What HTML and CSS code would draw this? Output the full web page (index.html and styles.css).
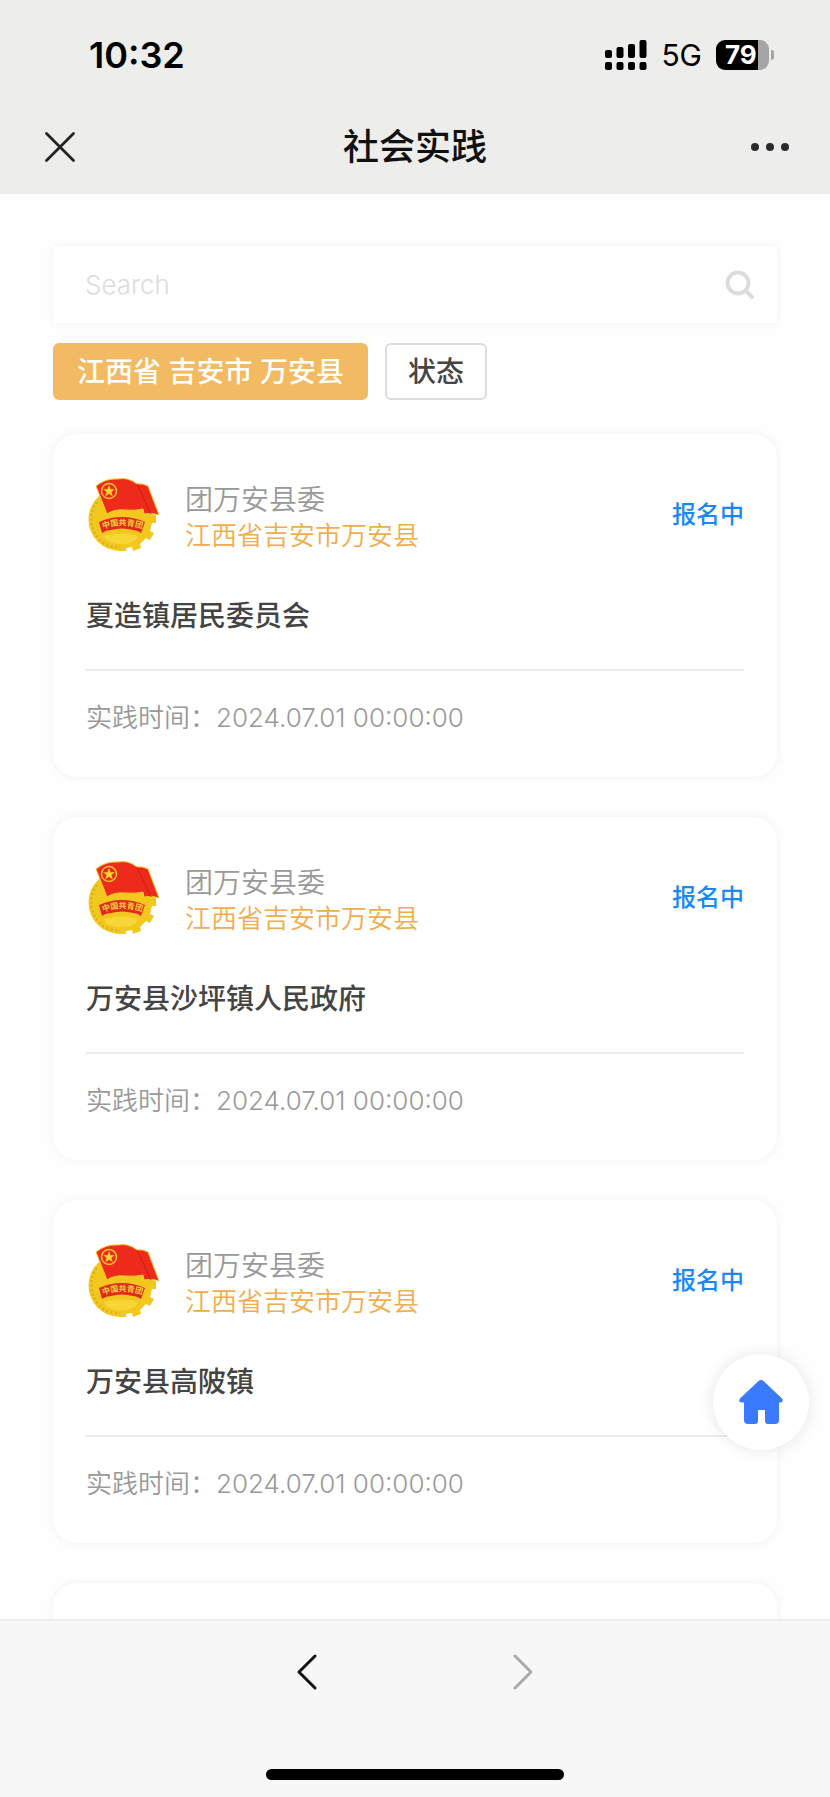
FILE: index.html
```html
<!DOCTYPE html>
<html lang="zh-CN">
<head>
    <meta charset="UTF-8">
    <meta name="viewport" content="width=device-width, initial-scale=1.0">
    <title>社会实践</title>
    <link rel="stylesheet" href="styles.css">
</head>
<body>
    <header class="topbar">
        <div class="status">
            <span class="time">10:32</span>
            <div class="status-right">
                <svg width="42" height="30" viewBox="0 0 42 30" aria-hidden="true">
                    <rect x="0" y="10" width="7" height="8" rx="2"/>
                    <rect x="11.500" y="7" width="7" height="11" rx="2"/>
                    <rect x="23" y="4" width="7" height="14" rx="2"/>
                    <rect x="34.500" y="0" width="7" height="18" rx="2"/>
                    <rect x="0" y="22" width="7" height="8" rx="2"/>
                    <rect x="11.500" y="22" width="7" height="8" rx="2"/>
                    <rect x="23" y="22" width="7" height="8" rx="2"/>
                    <rect x="34.500" y="22" width="7" height="8" rx="2"/>
                </svg>
                <span class="network">5G</span>
                <span class="battery">79</span>
            </div>
        </div>
        <div class="navbar">
            <button class="icon-btn" aria-label="关闭">
                <svg width="30" height="30" viewBox="0 0 30 30"><path d="M1.500 1.500l27 27M28.500 1.500l-27 27" fill="none" stroke="#222" stroke-width="2.800" stroke-linecap="round"/></svg>
            </button>
            <h1>社会实践</h1>
            <button class="icon-btn" aria-label="更多">
                <svg width="38" height="8" viewBox="0 0 38 8" fill="#2b2b2b"><circle cx="4" cy="4" r="4"/><circle cx="19" cy="4" r="4"/><circle cx="34" cy="4" r="4"/></svg>
            </button>
        </div>
    </header>

    <main class="content">
        <label class="search">
            <input type="text" placeholder="Search" aria-label="Search">
            <svg width="30" height="30" viewBox="0 0 30 30" fill="none" stroke="#dcdcdc" stroke-linecap="round"><circle cx="13" cy="13" r="10.500" stroke-width="4"/><path d="M21 21l6 6" stroke-width="4"/></svg>
        </label>

        <div class="filters">
            <button class="chip chip-active">江西省 吉安市 万安县</button>
            <button class="chip">状态</button>
        </div>

        <article class="card">
            <div class="card-head">
                <!-- the other cards reuse this emblem -->
                <svg class="emblem" viewBox="0 0 74 74">
                    <g id="emblem">
                        <path d="M34 10A31.500 31.500 0 0 0 34 73h6v-3l6-1 1 4 8-3-1-4 6-6 4 2 4-7-4-2 2-8h4v-8l-4-1Q60 12 34 10z" fill="#f3c81e"/>
                        <path d="M11 24C2 35 4 51 13 61s21 8 21 8" fill="none" stroke="#dfae1f" stroke-width="2.500" stroke-dasharray="2 2.500"/>
                        <path d="M18 58q17-5 34 0-3 8-17 8t-17-8z" fill="#f8d638"/>
                        <path d="M10 8Q20 0 32 1q10-2 19 5 5-1 11 2l11 29q-7-3-15-1l-1-5q-8 2-18 1-11-1-18 4z" fill="#ee2a1b" stroke="#f6c92b" stroke-width="1"/>
                        <path d="M51 6l14 30" stroke="#c91f18" stroke-width="1"/>
                        <circle cx="23" cy="13" r="7.500" fill="none" stroke="#f6c92b" stroke-width="1.500"/>
                        <path d="M23 7l1.500 4.300h4.300l-3.400 2.700 1.300 4.300-3.700-2.600-3.700 2.600 1.300-4.300-3.400-2.700h4.300z" fill="#f8d733"/>
                        <path d="M13 44q23-10 46 0l-4 11q-4-3-8-3-11-3-22 0-5 0-9 3z" fill="#e3291b"/>
                        <path id="ribbon" d="M17 51q19-7 40 0" fill="none"/>
                        <text class="ribbon-text"><textPath href="#ribbon">中国共青团</textPath></text>
                    </g>
                </svg>
                <div class="org">
                    <p class="org-name">团万安县委</p>
                    <p class="org-area">江西省吉安市万安县</p>
                </div>
                <span class="state">报名中</span>
            </div>
            <h2>夏造镇居民委员会</h2>
            <p class="date">实践时间：<span>2024.07.01 00:00:00</span></p>
        </article>

        <article class="card">
            <div class="card-head">
                <svg class="emblem" viewBox="0 0 74 74"><use href="#emblem"/></svg>
                <div class="org">
                    <p class="org-name">团万安县委</p>
                    <p class="org-area">江西省吉安市万安县</p>
                </div>
                <span class="state">报名中</span>
            </div>
            <h2>万安县沙坪镇人民政府</h2>
            <p class="date">实践时间：<span>2024.07.01 00:00:00</span></p>
        </article>

        <article class="card">
            <div class="card-head">
                <svg class="emblem" viewBox="0 0 74 74"><use href="#emblem"/></svg>
                <div class="org">
                    <p class="org-name">团万安县委</p>
                    <p class="org-area">江西省吉安市万安县</p>
                </div>
                <span class="state">报名中</span>
            </div>
            <h2>万安县高陂镇</h2>
            <p class="date">实践时间：<span>2024.07.01 00:00:00</span></p>
        </article>

        <article class="card"></article>
    </main>

    <a class="home" href="#" aria-label="首页">
        <svg width="44" height="44" viewBox="0 0 44 44" fill="#3a7afe"><path d="M19.500 1q2.500-2 5 0L43 18.500q2 3.500-1.500 4H40V40q0 4-4 4H29q-3 0-3-3V30h-7v11q0 3-3 3H9q-4 0-4-4V22.500H2.500Q-1 22 1 18.500z"/></svg>
    </a>

    <footer class="toolbar">
        <div class="arrows">
            <button class="arrow" aria-label="后退">
                <svg width="20" height="36" viewBox="0 0 20 36"><path d="M18 2L2 18l16 16" fill="none" stroke="#111" stroke-width="3" stroke-linecap="round" stroke-linejoin="round"/></svg>
            </button>
            <button class="arrow" aria-label="前进" disabled>
                <svg width="20" height="36" viewBox="0 0 20 36"><path d="M2 2l16 16L2 34" fill="none" stroke="#aaa" stroke-width="3" stroke-linecap="round" stroke-linejoin="round"/></svg>
            </button>
        </div>
        <div class="home-bar"></div>
    </footer>
</body>
</html>
```
FILE: styles.css
```css
* {
    box-sizing: border-box;
    margin: 0;
    padding: 0;
}

body {
    display: flex;
    flex-direction: column;
    height: 100vh;
    overflow: hidden;
    background: #fefefe;
    color: #444;
    font-family: Inter, "Noto Sans CJK SC", sans-serif;
    font-size: 26px;
}

button {
    border: none;
    background: none;
    font: inherit;
    cursor: pointer;
}

svg {
    display: block;
}

/* top */
.topbar {
    flex: none;
    padding-bottom: 10px;
    background: #ededeb;
    color: #000;
}

.status {
    display: flex;
    align-items: center;
    justify-content: space-between;
    height: 110px;
    padding: 0 61px 0 89px;
}

.time {
    font-size: 36px;
    font-weight: 600;
}

.status-right {
    display: flex;
    align-items: center;
    gap: 14px;
}

.network {
    font-size: 30px;
}

.battery {
    position: relative;
    width: 53px;
    height: 30px;
    padding-left: 9px;
    border-radius: 9px;
    background: linear-gradient(to right, #000 79%, #a5a5a5 79%);
    color: #fff;
    font-size: 26px;
    font-weight: 700;
    line-height: 30px;
}

.battery::after {
    content: "";
    position: absolute;
    top: 10px;
    right: -5px;
    width: 3px;
    height: 10px;
    border-radius: 0 3px 3px 0;
    background: #a5a5a5;
}

.navbar {
    display: flex;
    align-items: center;
    justify-content: space-between;
    height: 74px;
    padding: 0 40px;
}

.icon-btn {
    display: flex;
    align-items: center;
    justify-content: center;
    width: 40px;
    height: 48px;
}

h1 {
    color: #111;
    font-size: 36px;
    font-weight: 500;
    line-height: 48px;
}

/* list */
.content {
    flex: 1;
    min-height: 0;
    overflow: hidden;
    padding: 52px 53px 0;
}

.search {
    display: flex;
    align-items: center;
    height: 77px;
    padding: 0 22px 0 32px;
    background: #fff;
    box-shadow: 0 0 8px rgba(0, 0, 0, 0.06);
}

.search input {
    flex: 1;
    min-width: 0;
    border: none;
    outline: none;
    background: none;
    font: inherit;
    font-weight: 300;
}

.search input::placeholder {
    color: #dcdcdc;
}

.filters {
    display: flex;
    gap: 17px;
    margin: 20px 0 34px;
}

.chip {
    height: 57px;
    padding: 0 21px;
    border: 2px solid #ddd;
    border-radius: 6px;
    background: #fff;
    color: #444;
    font-size: 28px;
    font-weight: 500;
    line-height: 40px;
}

.chip-active {
    padding: 0 22px;
    border-color: #f1ba63;
    background: #f1ba63;
    color: #fff;
}

.card {
    min-height: 343px;
    margin-bottom: 40px;
    padding: 44px 33px 39px;
    border-radius: 24px;
    background: #fff;
    box-shadow: 0 0 10px rgba(0, 0, 0, 0.06);
}

.card-head {
    display: flex;
    align-items: center;
    height: 74px;
}

.emblem {
    width: 74px;
    height: 74px;
    margin-right: 25px;
}

.ribbon-text {
    font-size: 8px;
    font-weight: 700;
    fill: #f8d040;
}

.org {
    flex: 1;
    padding-top: 6px;
    line-height: 36px;
    font-weight: 350;
}

.org-name {
    color: #999;
    font-size: 28px;
}

.org-area {
    color: #f0ad4e;
}

.state {
    padding-bottom: 6px;
    color: #1989fa;
    font-size: 24px;
    font-weight: 500;
}

h2 {
    margin-top: 44px;
    padding-bottom: 33px;
    border-bottom: 2px solid #ececec;
    font-size: 28px;
    font-weight: 500;
    line-height: 40px;
}

.date {
    margin-top: 27px;
    color: #999;
    font-weight: 350;
    line-height: 40px;
}

.home {
    position: absolute;
    right: 21px;
    bottom: 347px;
    display: flex;
    align-items: center;
    justify-content: center;
    width: 96px;
    height: 96px;
    border-radius: 50%;
    background: #fff;
    box-shadow: 0 0 16px rgba(0, 0, 0, 0.1);
}

/* bottom */
.toolbar {
    flex: none;
    height: 178px;
    padding: 27px 0 17px;
    border-top: 2px solid #efefef;
    background: #f7f7f7;
    display: flex;
    flex-direction: column;
    align-items: center;
    justify-content: space-between;
}

.arrows {
    display: flex;
    gap: 168px;
}

.arrow {
    display: flex;
    align-items: center;
    justify-content: center;
    width: 48px;
    height: 48px;
}

.home-bar {
    width: 36%;
    height: 11px;
    border-radius: 6px;
    background: #000;
}
```
